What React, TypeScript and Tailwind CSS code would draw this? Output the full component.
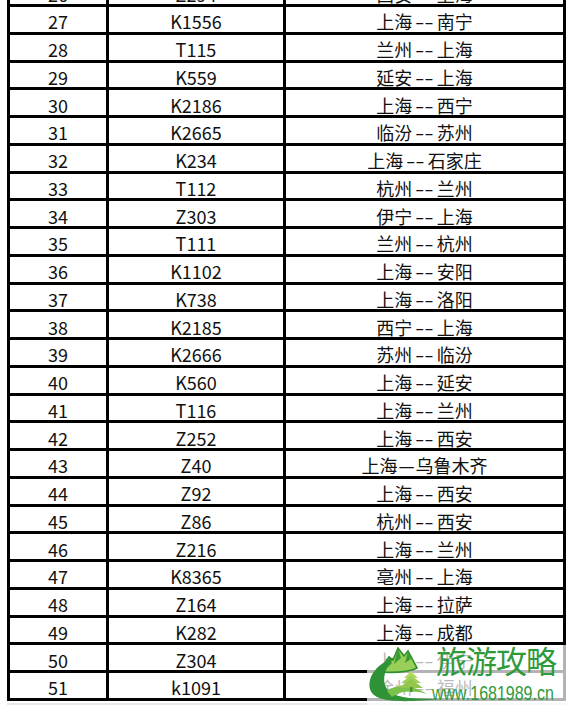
const rows: [string, string, string][] = [
  ["26", "Z294", "西安--上海"],
  ["27", "K1556", "上海--南宁"],
  ["28", "T115", "兰州--上海"],
  ["29", "K559", "延安--上海"],
  ["30", "K2186", "上海--西宁"],
  ["31", "K2665", "临汾--苏州"],
  ["32", "K234", "上海--石家庄"],
  ["33", "T112", "杭州--兰州"],
  ["34", "Z303", "伊宁--上海"],
  ["35", "T111", "兰州--杭州"],
  ["36", "K1102", "上海--安阳"],
  ["37", "K738", "上海--洛阳"],
  ["38", "K2185", "西宁--上海"],
  ["39", "K2666", "苏州--临汾"],
  ["40", "K560", "上海--延安"],
  ["41", "T116", "上海--兰州"],
  ["42", "Z252", "上海--西安"],
  ["43", "Z40", "上海—乌鲁木齐"],
  ["44", "Z92", "上海--西安"],
  ["45", "Z86", "杭州--西安"],
  ["46", "Z216", "上海--兰州"],
  ["47", "K8365", "亳州--上海"],
  ["48", "Z164", "上海--拉萨"],
  ["49", "K282", "上海--成都"],
  ["50", "Z304", "上海--伊宁"],
  ["51", "k1091", "徐州--福州"],
];

// the scan's font draws longer dashes, so stretch them a bit
function Route({ text }: { text: string }) {
  const parts = text.split(/(--|—)/);
  return (
    <span className="flex items-center">
      {parts.map((p, i) =>
        p === "--" ? (
          <span key={i} className="inline-block mx-[6px] scale-x-[1.5]">
            {p}
          </span>
        ) : p === "—" ? (
          <span key={i} className="inline-block mx-[1px]">
            {p}
          </span>
        ) : (
          <span key={i}>{p}</span>
        )
      )}
    </span>
  );
}

function Logo() {
  return (
    <svg
      className="absolute left-[366px] top-[645px]"
      width="76"
      height="60"
      viewBox="366 645 76 60"
    >
      {/* mountain */}
      <path
        d="M379 672 L389 657 L393 660 L398 648 L404 656 L408 651 L417 668 C409 672 395 673 379 672 Z"
        fill="#98cf58"
        stroke="#2f8f2f"
        strokeWidth="1.6"
      />
      <path d="M398 648 L394 664 L401 658 Z M408 651 L405 663 L411 659 Z M389 657 L387 668 L392 663 Z" fill="#3d9b35" />
      {/* big swoosh */}
      <path
        d="M395 657 C378 663 367 676 370 689 C373 700 390 704 441 699 C412 699 395 698 388 690 C381 682 384 668 395 657 Z"
        fill="#2f9236"
      />
      <path
        d="M387 691 C396 684 411 684 427 694 C413 690 400 691 392 697 Z"
        fill="#7cc24a"
      />
      {/* tree */}
      <path d="M411 671 L404 678 L418 678 Z" fill="#b2d866" />
      <path d="M411 675 L401 683 L421 683 Z" fill="#a2cf58" />
      <path d="M411 679 L399 688 L423 688 Z" fill="#92c64c" />
      <rect x="410" y="687" width="2.5" height="5" fill="#4c8f2c" />
    </svg>
  );
}

export default function App() {
  return (
    <div
      className="relative w-[570px] h-[710px] overflow-hidden bg-white text-[#111]"
      style={{ fontFamily: '"Noto Sans CJK SC", "Noto Sans", sans-serif' }}
    >
      <div className="mt-[-20.76px] ml-[7px] w-[559px] border-x-[3px] border-black">
        {rows.map(([no, train, route]) => (
          <div key={no} className="flex h-[27.76px] border-b-[3px] border-black text-[18px] leading-none">
            <div className="w-[99px] shrink-0 flex items-center justify-center pt-[4px] border-r-[3px] border-black">
              {no}
            </div>
            <div className="w-[177px] shrink-0 flex items-center justify-center pt-[4px] border-r-[3px] border-black">
              {train}
            </div>
            <div className="flex-1 flex items-center justify-center pt-[4px]">
              <Route text={route} />
            </div>
          </div>
        ))}
      </div>
      <div className="ml-[7px] mt-[2px] w-[559px] h-[2px] bg-gray-200" />

      {/* watermark */}
      <div className="absolute left-[367px] top-[645px] w-[203px] h-[65px] bg-white/70" />
      <Logo />
      <div className="absolute left-[436px] top-[644px] text-[31px] leading-none tracking-[-1px] text-[#2f9a3a]">
        旅游攻略
      </div>
      <div
        className="absolute left-[432px] top-[683px] text-[20px] leading-none text-[#2f9a3a] scale-x-[0.8] origin-left"
        style={{ fontFamily: '"Liberation Sans", sans-serif' }}
      >
        www.1681989.cn
      </div>
    </div>
  );
}
